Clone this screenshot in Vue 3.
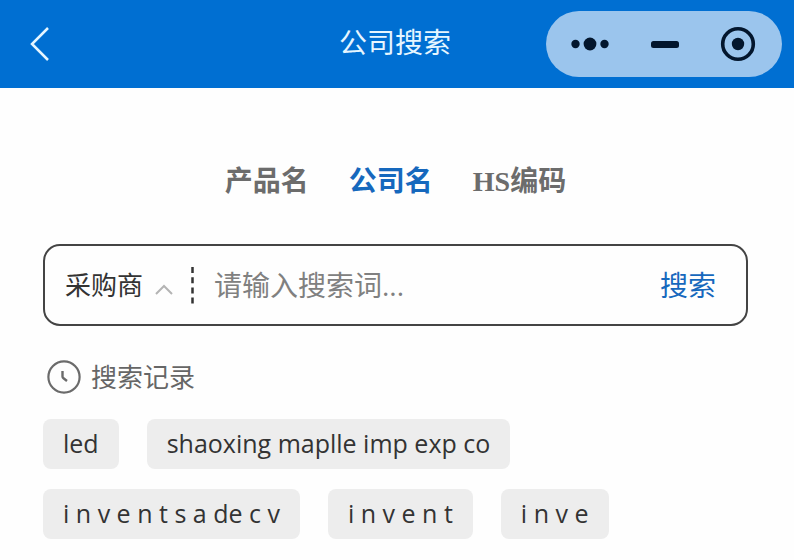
<script setup>
import { ref } from 'vue'

const tabs = ['产品名', '公司名', 'HS编码']
const activeTab = ref('公司名')
const role = ref('采购商')
const keyword = ref('')
const history = [
  'led',
  'shaoxing maplle imp exp co',
  'i n v e n t s a de c v',
  'i n v e n t',
  'i n v e'
]
</script>

<template>
  <div class="page">
    <header class="bar">
      <button class="back" type="button" aria-label="返回">
        <svg width="24" height="36" viewBox="0 0 24 36" fill="none" stroke="#e6f6ff" stroke-width="2.5">
          <path d="M20 2 L4 18 L20 34" />
        </svg>
      </button>
      <h1 class="title">公司搜索</h1>
      <div class="capsule">
        <button type="button" aria-label="更多">
          <svg width="38" height="16" viewBox="0 0 38 16" fill="#03162d">
            <circle cx="4.500" cy="8" r="4.200" />
            <circle cx="19" cy="8" r="6.400" />
            <circle cx="33.500" cy="8" r="4.200" />
          </svg>
        </button>
        <button type="button" aria-label="最小化">
          <svg width="28" height="8" viewBox="0 0 28 8" fill="#03162d">
            <rect x="0" y="1" width="28" height="7" rx="2.500" />
          </svg>
        </button>
        <button type="button" aria-label="关闭">
          <svg width="36" height="36" viewBox="0 0 36 36">
            <circle cx="18" cy="18" r="15.300" fill="none" stroke="#03162d" stroke-width="3.600" />
            <circle cx="18" cy="18" r="6.200" fill="#03162d" />
          </svg>
        </button>
      </div>
    </header>

    <main class="content">
      <nav class="tabs">
        <button
          v-for="tab in tabs"
          :key="tab"
          type="button"
          class="tab"
          :class="{ active: tab === activeTab }"
          @click="activeTab = tab"
        >{{ tab }}</button>
      </nav>

      <form class="search" @submit.prevent>
        <label class="role">
          <select v-model="role" aria-label="类型">
            <option>采购商</option>
          </select>
          <svg width="18" height="12" viewBox="0 0 18 12" fill="none" stroke="#b4b4b4" stroke-width="2">
            <path d="M1 10 L9 2 L17 10" />
          </svg>
        </label>
        <svg class="divider" width="3" height="38" viewBox="0 0 3 38">
          <path d="M1.500 1 V38" stroke="#333" stroke-width="2.500" stroke-dasharray="6 4.200" />
        </svg>
        <input v-model="keyword" type="text" placeholder="请输入搜索词..." aria-label="搜索词" />
        <button class="submit" type="submit">搜索</button>
      </form>

      <section>
        <h2 class="heading">
          <svg width="34" height="34" viewBox="0 0 34 34" fill="none" stroke="#6b6b6b">
            <circle cx="17" cy="17" r="15.600" stroke-width="2.200" />
            <path d="M15.500 11 V16.500 Q15.500 17.500 16.500 18.300 L20 21" stroke-width="2.400" />
          </svg>
          <span>搜索记录</span>
        </h2>
        <div class="tags">
          <button v-for="item in history" :key="item" type="button" class="tag" @click="keyword = item">{{ item }}</button>
        </div>
      </section>
    </main>
  </div>
</template>

<style>
body {
  background: #fefefe;
}
</style>

<style scoped>
.page {
  font-family: "Open Sans", "Noto Sans CJK SC", sans-serif;
  color: #333;
}

button,
input,
select {
  margin: 0;
  padding: 0;
  border: 0;
  background: none;
  font: inherit;
  color: inherit;
}

button {
  cursor: pointer;
}

svg {
  display: block;
  flex: none;
}

.bar {
  display: grid;
  grid-template-columns: 1fr auto 1fr;
  align-items: center;
  height: 88px;
  padding: 0 12px 0 28px;
  background: #006fd2;
}

.back {
  justify-self: start;
}

.title {
  margin: 0 20px 4px 0;
  font-size: 28px;
  line-height: 40px;
  font-weight: 400;
  color: #e6f6ff;
}

.capsule {
  justify-self: end;
  display: flex;
  align-items: center;
  justify-content: space-between;
  box-sizing: border-box;
  width: 236px;
  height: 66px;
  padding: 0 26px 0 25px;
  border-radius: 33px;
  background: #9bc5ed;
}

.content {
  padding: 74px 46px 20px 43px;
}

.tabs {
  display: flex;
  justify-content: center;
  gap: 40px;
  font-family: "Liberation Serif", "Noto Sans CJK SC", serif;
  font-size: 28px;
  line-height: 40px;
}

.tab {
  font-weight: 700;
  color: #6c6c6c;
}

.tab.active {
  color: #1668bd;
}

.search {
  display: flex;
  align-items: center;
  box-sizing: border-box;
  height: 82px;
  margin-top: 42px;
  padding: 0 30px 0 20px;
  border: 2px solid #444;
  border-radius: 17px;
}

.role {
  display: flex;
  align-items: center;
  gap: 10px;
  font-size: 26px;
}

.role select {
  appearance: none;
  width: 80px;
  line-height: 40px;
}

.role svg {
  margin-top: 10px;
}

.divider {
  margin: 0 20px 0 18px;
}

.search input {
  flex: 1;
  min-width: 0;
  font-size: 28px;
  line-height: 40px;
  outline: none;
}

.search input::placeholder {
  color: #808080;
  opacity: 1;
}

.submit {
  font-size: 28px;
  line-height: 40px;
  color: #1668bd;
}

.heading {
  display: flex;
  align-items: center;
  gap: 10px;
  margin: 31px 0 22px 4px;
  font-size: 26px;
  line-height: 40px;
  font-weight: 400;
  color: #666;
}

.tags {
  display: flex;
  flex-wrap: wrap;
  gap: 20px 28px;
}

.tag {
  height: 50px;
  padding: 0 20px 2px;
  border-radius: 8px;
  background: #ededed;
  font-size: 25px;
  line-height: 48px;
}
</style>
